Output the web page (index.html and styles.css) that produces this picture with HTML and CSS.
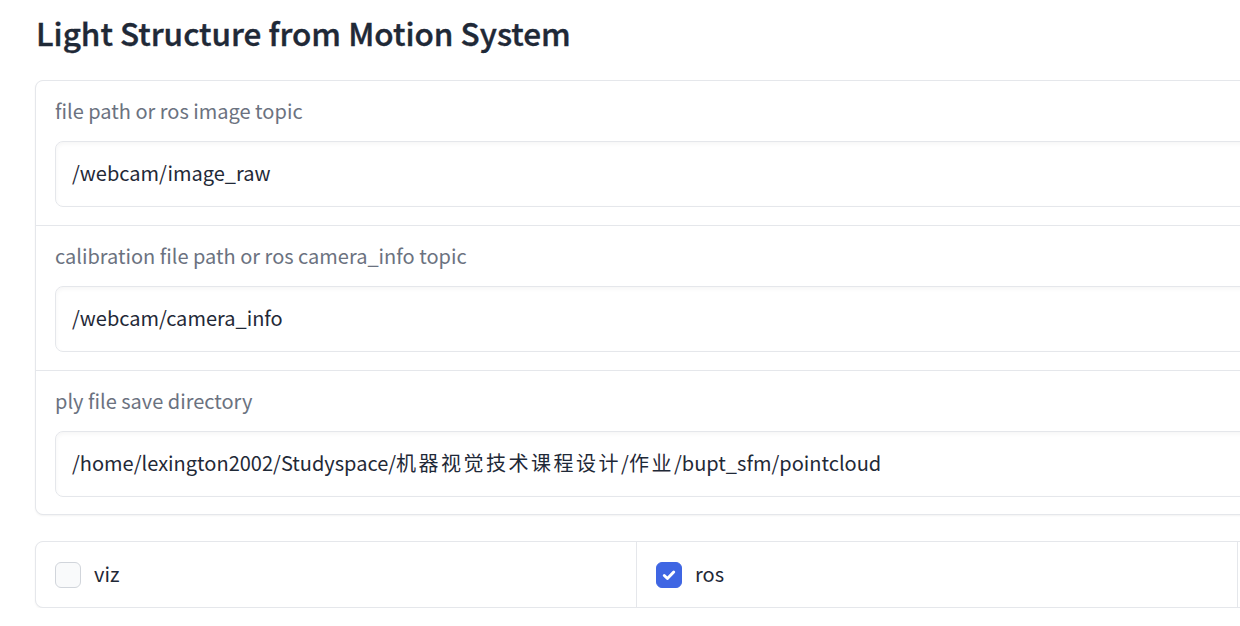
FILE: index.html
```html
<!DOCTYPE html>
<html lang="en">
<head>
<meta charset="utf-8">
<title>Light Structure from Motion System</title>
<link rel="stylesheet" href="styles.css">
</head>
<body>
<main class="app">
  <h1 class="title">Light Structure from Motion System</h1>
  <section class="form">
    <div class="field">
      <label class="field-label">file path or ros image topic</label>
      <div class="input">/webcam/image_raw</div>
    </div>
    <div class="field">
      <label class="field-label">calibration file path or ros camera_info topic</label>
      <div class="input">/webcam/camera_info</div>
    </div>
    <div class="field">
      <label class="field-label">ply file save directory</label>
      <div class="input">/home/lexington2002/Studyspace/<span class="cjk">机器视觉技术课程设计</span>/<span class="cjk">作业</span>/bupt_sfm/pointcloud</div>
    </div>
  </section>
  <section class="checks">
    <div class="check-cell">
      <span class="box"></span>
      <span class="check-label">viz</span>
    </div>
    <div class="check-cell">
      <span class="box checked">
        <svg viewBox="0 0 16 16" width="18" height="18"><path d="M3.8 8.4l2.8 2.7 5.6-5.8" fill="none" stroke="#fff" stroke-width="2.6" stroke-linecap="round" stroke-linejoin="round"/></svg>
      </span>
      <span class="check-label">ros</span>
    </div>
    <div class="check-cell"></div>
  </section>
</main>
</body>
</html>
```

FILE: styles.css
```css
html, body {
  margin: 0;
  padding: 0;
  background: #ffffff;
  overflow: hidden;
}
body {
  font-family: "Noto Sans CJK SC", "Noto Sans", sans-serif;
  color: #1f2937;
}
.app {
  width: 1804px;
  padding: 10px 0 0 35px;
}
.title {
  margin: 0 0 0 1px;
  font-size: 31.5px;
  font-weight: 500;
  line-height: 44px;
  color: #1f2937;
  letter-spacing: 0;
  -webkit-text-stroke: 0.4px #1f2937;
}
.form {
  margin-top: 26px;
  border: 1px solid #e5e7eb;
  border-radius: 8px;
  display: flex;
  flex-direction: column;
  gap: 1px;
  background: #e5e7eb;
  overflow: hidden;
  box-shadow: 0 1px 2px rgba(0,0,0,0.05);
}
.field {
  background: #ffffff;
  padding: 15px 19px 18px 19px;
  display: flex;
  flex-direction: column;
}
.field:last-child {
  padding-bottom: 17px;
}
.field-label {
  font-size: 20px;
  line-height: 30px;
  color: #6b7280;
  margin-bottom: 15px;
}
.input {
  box-sizing: content-box;
  border: 1px solid #e5e7eb;
  border-radius: 8px;
  box-shadow: inset 0 2px 4px rgba(0,0,0,0.04);
  padding: 0 16px 3px 16px;
  height: 61px;
  display: flex;
  align-items: center;
  font-size: 20px;
  color: #1f2937;
  white-space: nowrap;
}
.cjk {
  letter-spacing: 2.5px;
}
.checks {
  margin-top: 26px;
  border: 1px solid #e5e7eb;
  border-radius: 8px;
  display: grid;
  grid-template-columns: 600px 600px 1fr;
  gap: 1px;
  background: #e5e7eb;
  overflow: hidden;
  box-shadow: 0 1px 2px rgba(0,0,0,0.05);
}
.check-cell {
  background: #ffffff;
  height: 65px;
  padding: 0 19px;
  display: flex;
  align-items: center;
  gap: 13px;
}
.box {
  width: 24px;
  height: 24px;
  border: 1px solid #d1d5db;
  border-radius: 6px;
  background: #f9fafb;
  display: flex;
  align-items: center;
  justify-content: center;
  flex: none;
}
.box.checked {
  background: #3f66e3;
  border-color: #3f66e3;
}
.check-label {
  font-size: 20px;
  line-height: 26px;
  padding-bottom: 2px;
  color: #1f2937;
}
```
